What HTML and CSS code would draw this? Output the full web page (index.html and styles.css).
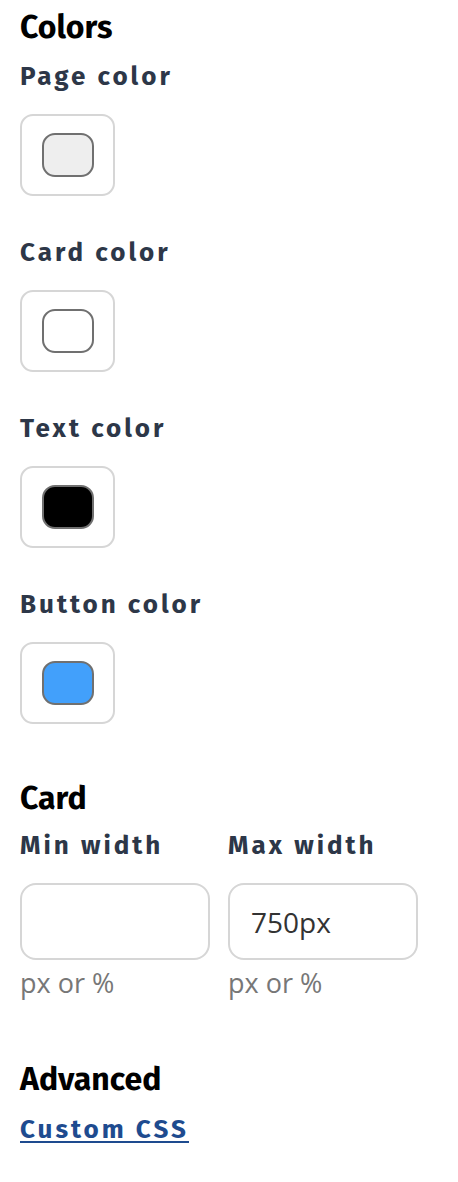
FILE: index.html
```html
<!DOCTYPE html>
<html>
<head>
<meta charset="utf-8">
<link rel="stylesheet" href="styles.css">
</head>
<body>
<main class="settings">
  <h2 class="section-title">Colors</h2>
  <div class="field">
    <label class="label">Page color</label>
    <div class="swatch-box"><span class="swatch swatch-page"></span></div>
  </div>
  <div class="field">
    <label class="label">Card color</label>
    <div class="swatch-box"><span class="swatch swatch-card"></span></div>
  </div>
  <div class="field">
    <label class="label">Text color</label>
    <div class="swatch-box"><span class="swatch swatch-text"></span></div>
  </div>
  <div class="field">
    <label class="label">Button color</label>
    <div class="swatch-box"><span class="swatch swatch-button"></span></div>
  </div>

  <h2 class="section-title card-title">Card</h2>
  <div class="row">
    <div class="col">
      <label class="label">Min width</label>
      <div class="input"></div>
      <div class="hint">px or %</div>
    </div>
    <div class="col">
      <label class="label">Max width</label>
      <div class="input">750px</div>
      <div class="hint">px or %</div>
    </div>
  </div>

  <h2 class="section-title adv-title">Advanced</h2>
  <a class="link" href="#">Custom CSS</a>
</main>
</body>
</html>
```

FILE: styles.css
```css
html, body {
  margin: 0;
  padding: 0;
  background: #ffffff;
}
.settings {
  padding: 7px 20px 0 20px;
  font-family: "Fira Sans", Lato, "Open Sans", sans-serif;
  display: flex;
  flex-direction: column;
  align-items: flex-start;
}
.section-title {
  margin: 0;
  font-size: 32px;
  line-height: 40px;
  font-weight: 700;
  color: #000;
}
.field {
  display: flex;
  flex-direction: column;
  margin-top: 14px;
}
.field + .field {
  margin-top: 41px;
}
.label {
  display: block;
  font-size: 26px;
  line-height: 32px;
  font-weight: 700;
  letter-spacing: 3px;
  color: #2d3748;
  white-space: nowrap;
}
.swatch-box {
  margin-top: 21px;
  width: 91px;
  height: 78px;
  border: 2px solid #d6d6d6;
  border-radius: 13px;
  display: flex;
  align-items: center;
  justify-content: center;
}
.swatch {
  display: block;
  width: 48px;
  height: 40px;
  border: 2px solid #707070;
  border-radius: 13px;
}
.swatch-page { background: #eeeeee; }
.swatch-card { background: #ffffff; }
.swatch-text { background: #000000; }
.swatch-button { background: #42a0fb; }

.card-title {
  margin-top: 54px;
}
.row {
  display: flex;
  gap: 18px;
  margin-top: 12px;
}
.col {
  display: flex;
  flex-direction: column;
  width: 190px;
}
.input {
  margin-top: 21px;
  box-sizing: border-box;
  height: 77px;
  border: 2px solid #d6d6d6;
  border-radius: 16px;
  padding: 0 21px;
  display: flex;
  align-items: center;
  font-family: "Open Sans", sans-serif;
  font-size: 28px;
  color: #333;
}
.hint {
  margin-top: 7px;
  font-family: "Open Sans", sans-serif;
  font-size: 27px;
  line-height: 32px;
  color: #777;
}
.adv-title {
  margin-top: 60px;
}
.link {
  display: inline-block;
  margin-top: 15px;
  font-size: 26px;
  line-height: 32px;
  font-weight: 700;
  letter-spacing: 3px;
  color: #1e4b8f;
  text-decoration: underline;
  text-decoration-thickness: 2px;
  text-underline-offset: 3px;
}
```
